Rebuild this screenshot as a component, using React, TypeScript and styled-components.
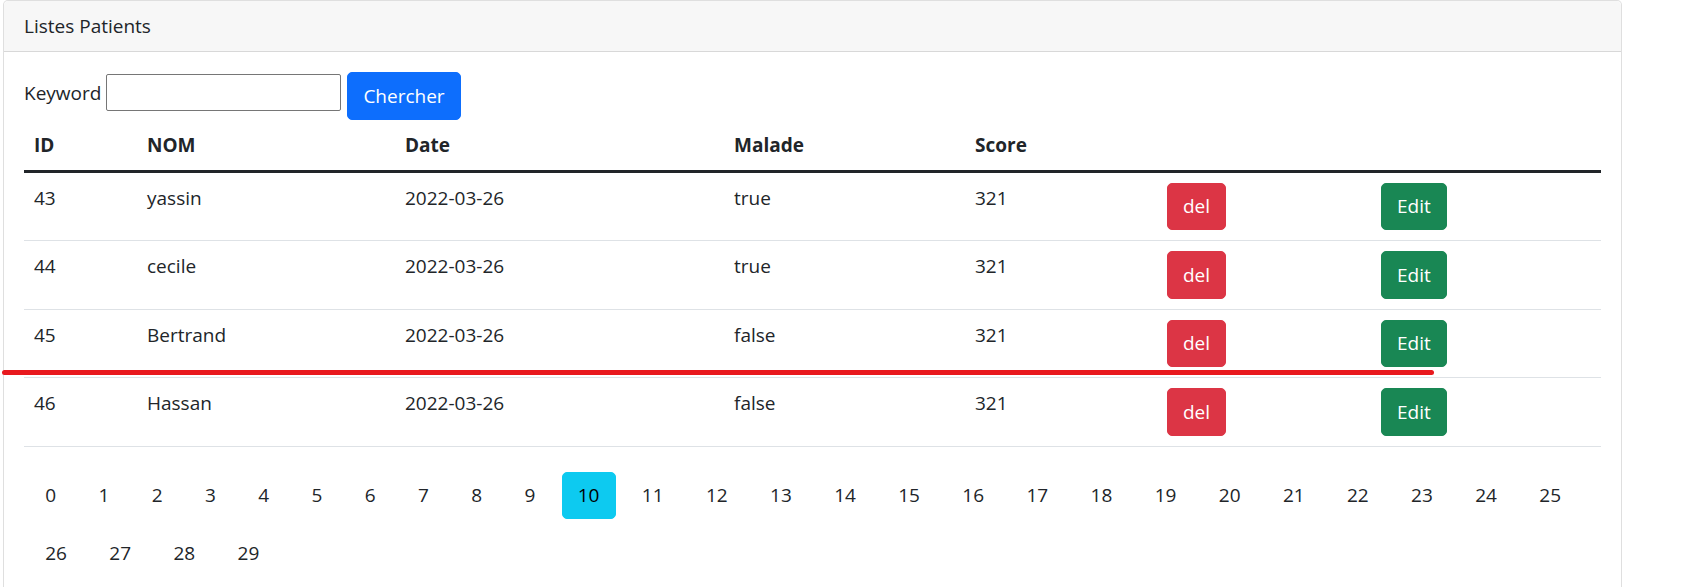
import React from "react";
import styled, { createGlobalStyle } from "styled-components";

const GlobalStyle = createGlobalStyle`
  * {
    box-sizing: border-box;
  }
  html,
  body {
    margin: 0;
    overflow: hidden;
    background: #fff;
  }
  body {
    font-family: "Segoe UI", "Open Sans", "Noto Sans", sans-serif;
    font-size: 19px;
    line-height: 30px;
    color: #212529;
  }
`;

type Patient = {
  id: number;
  nom: string;
  date: string;
  malade: boolean;
  score: number;
};

const patients: Patient[] = [
  { id: 43, nom: "yassin", date: "2022-03-26", malade: true, score: 321 },
  { id: 44, nom: "cecile", date: "2022-03-26", malade: true, score: 321 },
  { id: 45, nom: "Bertrand", date: "2022-03-26", malade: false, score: 321 },
  { id: 46, nom: "Hassan", date: "2022-03-26", malade: false, score: 321 },
];

const columns = [
  { label: "ID", width: 113 },
  { label: "NOM", width: 258 },
  { label: "Date", width: 329 },
  { label: "Malade", width: 241 },
  { label: "Score", width: 192 },
  { label: "", width: 214 },
  { label: "", width: 230 },
];

const pages = Array.from({ length: 30 }, (_, i) => i);
const currentPage = 10;

const App = () => {
  return (
    <>
      <GlobalStyle />
      <Page>
        <Card>
          <CardHeader>Listes Patients</CardHeader>
          <CardBody>
            <SearchForm onSubmit={(e) => e.preventDefault()}>
              <Label>Keyword</Label>
              <Input type="text" name="keyword" />
              <Button $variant="primary" type="submit">
                Chercher
              </Button>
            </SearchForm>

            <Table>
              <thead>
                <tr>
                  {columns.map((c, i) => (
                    <HeadCell key={i} $w={c.width}>
                      {c.label}
                    </HeadCell>
                  ))}
                </tr>
              </thead>
              <tbody>
                {patients.map((p) => (
                  <tr key={p.id}>
                    <Cell>{p.id}</Cell>
                    <Cell>{p.nom}</Cell>
                    <Cell>{p.date}</Cell>
                    <Cell>{String(p.malade)}</Cell>
                    <Cell>{p.score}</Cell>
                    <Cell>
                      <Button $variant="danger">del</Button>
                    </Cell>
                    <Cell>
                      <Button $variant="success">Edit</Button>
                    </Cell>
                  </tr>
                ))}
              </tbody>
            </Table>

            <Pagination>
              {pages.map((n) => (
                <li key={n}>
                  <PageLink $active={n === currentPage}>{n}</PageLink>
                </li>
              ))}
            </Pagination>
          </CardBody>
        </Card>
        <Underline />
      </Page>
    </>
  );
};

export default App;

const Page = styled.div`
  position: relative;
  padding-left: 3px;
`;

const Card = styled.div`
  width: 1619px;
  border: 1px solid rgba(0, 0, 0, 0.125);
  border-radius: 5px;
  background: #fff;
`;

const CardHeader = styled.div`
  padding: 10px 20px;
  line-height: 30px;
  background: #f7f7f7;
  border-bottom: 1px solid rgba(0, 0, 0, 0.125);
  border-radius: 5px 5px 0 0;
`;

const CardBody = styled.div`
  padding: 20px;
`;

const SearchForm = styled.form`
  display: flex;
  align-items: flex-start;
  margin: 0;
`;

const Label = styled.label`
  margin-top: 6px;
  margin-right: 5px;
`;

const Input = styled.input`
  width: 235px;
  height: 37px;
  margin-top: 2px;
  margin-right: 6px;
  padding: 1px 3px;
  border: 1px solid #767676;
  border-radius: 2px;
  font: inherit;
  font-size: 16px;
`;

const variants = {
  primary: "#0d6efd",
  danger: "#dc3545",
  success: "#198754",
};

const Button = styled.button<{ $variant: keyof typeof variants }>`
  display: inline-block;
  height: 47.5px;
  padding: 7.5px 15px;
  border: 1px solid ${(p) => variants[p.$variant]};
  border-radius: 5px;
  background: ${(p) => variants[p.$variant]};
  color: #fff;
  font: inherit;
  line-height: 30px;
  cursor: pointer;
`;

const Table = styled.table`
  width: 100%;
  margin-bottom: 20px;
  border-collapse: collapse;
  table-layout: fixed;
`;

const HeadCell = styled.th<{ $w: number }>`
  width: ${(p) => p.$w}px;
  padding: 10px;
  text-align: left;
  vertical-align: top;
  font-weight: 700;
  border-bottom: 3px solid #212529;
`;

const Cell = styled.td`
  padding: 10px;
  vertical-align: top;
  border-bottom: 1px solid #dee2e6;
`;

const Pagination = styled.ul`
  display: flex;
  flex-wrap: wrap;
  margin: 0;
  padding: 0;
  list-style: none;
`;

const PageLink = styled.a<{ $active: boolean }>`
  display: block;
  height: 47.5px;
  margin: 5px;
  padding: 7.5px 15.2px;
  border: 1px solid ${(p) => (p.$active ? "#0dcaf0" : "transparent")};
  border-radius: 5px;
  background: ${(p) => (p.$active ? "#0dcaf0" : "transparent")};
  color: ${(p) => (p.$active ? "#000" : "#212529")};
  line-height: 30px;
  cursor: pointer;
`;

const Underline = styled.div`
  position: absolute;
  left: 2px;
  top: 370px;
  width: 1432px;
  height: 5px;
  border-radius: 2.5px;
  background: #e8191e;
`;
